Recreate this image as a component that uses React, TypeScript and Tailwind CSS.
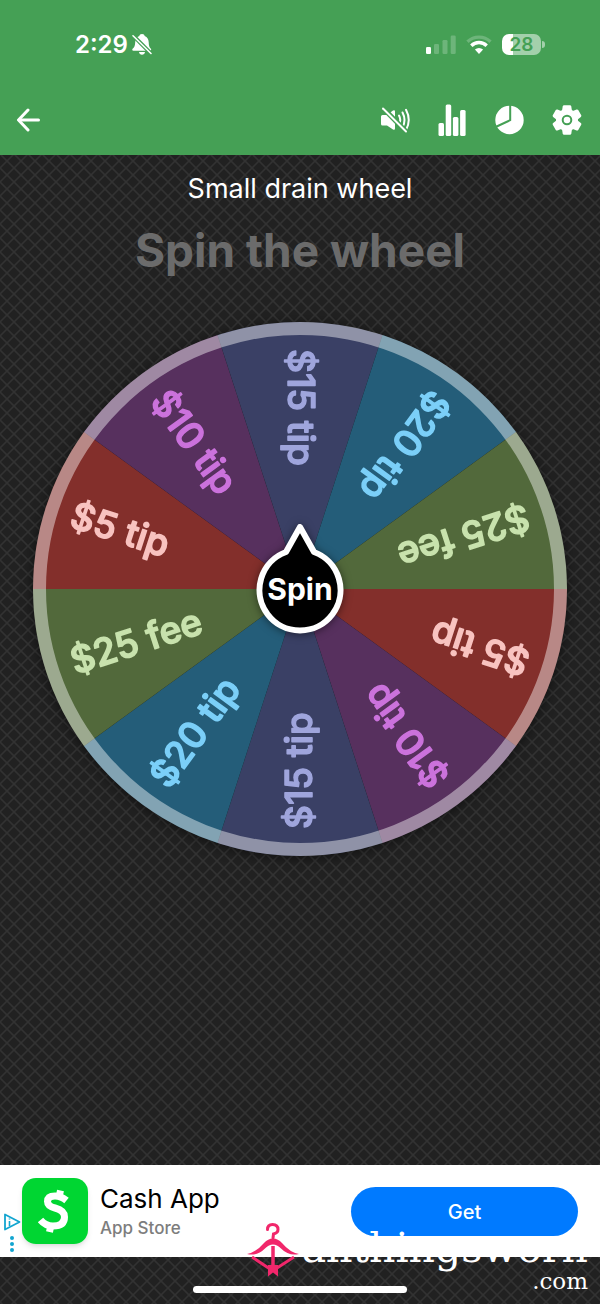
import React, { useState } from "react";

interface Slice {
  label: string;
  fill: string;
  text: string;
}

const options: Slice[] = [
  { label: "$5 tip", fill: "#832f2b", text: "#f8c3c0" },
  { label: "$10 tip", fill: "#57305e", text: "#cb72dc" },
  { label: "$15 tip", fill: "#3a4065", text: "#9fa5dc" },
  { label: "$20 tip", fill: "#245d79", text: "#7bcff8" },
  { label: "$25 fee", fill: "#52693b", text: "#c8e2ad" },
];

// every option appears twice round the wheel
const slices = [...options, ...options];
const STEP = 360 / slices.length;
const RADIUS = 267;

function slicePath() {
  const half = ((STEP / 2) * Math.PI) / 180;
  const x = -RADIUS * Math.cos(half);
  const y = RADIUS * Math.sin(half);
  return `M0 0 L${x} ${y} A${RADIUS} ${RADIUS} 0 0 1 ${x} ${-y} Z`;
}

function StatusBar() {
  return (
    <div className="flex items-center justify-between pl-[75px] pr-[55px] pt-7">
      <div className="flex items-center gap-1">
        <span className="pt-px text-2xl font-semibold">2:29</span>
        <svg viewBox="0 0 20 21" className="h-[21px] w-5" aria-hidden="true">
          <path
            fill="#fff"
            d="M10 0c1.600 0 2.500 1 2.700 1.900 2.700 1 3.900 3.300 4 6.300.1 3.900.8 5.100 2.200 6.600.5.600.3 1.900-.8 1.900H1.300C.2 16.700 0 15.400.6 14.800 2.200 13.200 3 12 3.200 8.200c.1-3 1.400-5.300 4.100-6.300C7.500 1 8.400 0 10 0z M7 18h6c-.3 1.700-1.400 2.700-3 2.700S7.300 19.700 7 18z"
          />
          <path d="M0.500 1 L20 20.500" stroke="#45a055" strokeWidth="4" />
          <path d="M1 1.800 L19 19.500" stroke="#fff" strokeWidth="1.600" strokeLinecap="round" />
        </svg>
      </div>
      <div className="flex items-center gap-[10px]">
        <svg viewBox="0 0 30 19" className="h-[19px] w-[30px]" fill="#fff" aria-hidden="true">
          <rect x="0" y="12" width="5" height="7" rx="1.300" />
          <rect x="8" y="9" width="5" height="10" rx="1.300" opacity="0.220" />
          <rect x="16.500" y="5" width="5" height="14" rx="1.300" opacity="0.220" />
          <rect x="24.700" y="0.500" width="5" height="18.500" rx="1.300" opacity="0.220" />
        </svg>
        <svg viewBox="0 0 26 19" className="h-[19px] w-[26px]" aria-hidden="true">
          <path d="M1.500 6.800 A16.500 16.500 0 0 1 24.500 6.800" fill="none" stroke="#fff" strokeWidth="3.400" opacity="0.220" />
          <path d="M5.300 10.700 A11 11 0 0 1 20.700 10.700" fill="none" stroke="#fff" strokeWidth="3.400" />
          <path d="M8.900 14.600 A6 6 0 0 1 17.100 14.600 L13 19 Z" fill="#fff" />
        </svg>
        <div className="flex items-center gap-px">
          <div className="flex h-[21px] w-[39px] items-center justify-center rounded-[7px] bg-[linear-gradient(90deg,#fff_28%,#a3d0ab_28%)] pt-px text-[19px] font-semibold leading-5 text-[#45a055]">
            28
          </div>
          <div className="h-[7px] w-[3px] rounded-r-full bg-[#a3d0ab]" />
        </div>
      </div>
    </div>
  );
}

function Toolbar() {
  const [muted, setMuted] = useState(true);

  return (
    <div className="flex items-center justify-between pl-4 pr-[18px]">
      <button type="button" aria-label="Back">
        <svg viewBox="0 0 24 24" className="size-6" fill="none" stroke="#fff" strokeWidth="3" strokeLinecap="round" strokeLinejoin="round">
          <path d="M12 2 L2.500 12 L12 22" />
          <path d="M3.500 12 H22.500" />
        </svg>
      </button>
      <div className="flex items-center gap-7">
        <button type="button" aria-label="Sound" aria-pressed={muted} onClick={() => setMuted(!muted)}>
          <svg viewBox="0 0 30 30" className="size-[30px]" fill="none">
            <path d="M2.500 10 H7 L13 5.500 Q15 4.500 15 6.500 V23.500 Q15 25.500 13 24.500 L7 20.500 H2.500 Q1 20.500 1 19 V11.500 Q1 10 2.500 10 Z" fill="#fff" />
            <path d="M19 10.500 Q21.500 15 19 19.500" stroke="#fff" strokeWidth="2" strokeLinecap="round" />
            <path d="M22.500 7.500 Q26.500 15 22.500 22.500" stroke="#fff" strokeWidth="2" strokeLinecap="round" />
            <path d="M26 4.800 Q31.500 15 26 25" stroke="#fff" strokeWidth="2" strokeLinecap="round" />
            {muted && (
              <>
                <path d="M3 3 L26.500 27" stroke="#45a055" strokeWidth="5" />
                <path d="M3 3.500 L26 26.500" stroke="#fff" strokeWidth="2" strokeLinecap="round" />
              </>
            )}
          </svg>
        </button>
        <button type="button" aria-label="Statistics">
          <svg viewBox="0 0 28 32" className="h-8 w-7" fill="#fff">
            <rect x="0.500" y="19" width="5.500" height="13" rx="1.500" />
            <rect x="7.700" y="0.500" width="5.500" height="31.500" rx="1.500" />
            <rect x="14.900" y="13" width="5.500" height="19" rx="1.500" />
            <rect x="22.100" y="6" width="5.500" height="26" rx="1.500" />
          </svg>
        </button>
        <button type="button" aria-label="Chances">
          <svg viewBox="0 0 30 30" className="size-[30px]">
            <circle cx="15.500" cy="15" r="14.200" fill="#fff" />
            <path d="M16.200 0 V15.200 L0.500 22.500" fill="none" stroke="#45a055" strokeWidth="2" />
          </svg>
        </button>
        <button type="button" aria-label="Settings">
          <svg viewBox="0 0 30 30" className="size-[30px]">
            <g fill="#fff">
              <circle cx="15" cy="15" r="11" />
              {[0, 60, 120].map((a) => (
                <path
                  key={a}
                  transform={`rotate(${a} 15 15)`}
                  d="M12 0.300 H18 Q19 0.300 19.300 1.500 L20 6 V24 L19.300 28.500 Q19 29.700 18 29.700 H12 Q11 29.700 10.700 28.500 L10 24 V6 L10.700 1.500 Q11 0.300 12 0.300 Z"
                />
              ))}
            </g>
            <circle cx="15" cy="15" r="4.300" fill="#fff" stroke="#45a055" strokeWidth="2" />
          </svg>
        </button>
      </div>
    </div>
  );
}

function Wheel() {
  const [turns, setTurns] = useState(0);

  return (
    <div className="grid w-full px-8">
      <svg
        viewBox="-268 -268 536 536"
        className="col-start-1 row-start-1 w-full overflow-visible drop-shadow-[0_2px_6px_rgba(0,0,0,0.5)] transition-transform duration-1000"
        style={{ transform: `rotate(${turns * STEP}deg)` }}
      >
        {slices.map((slice, i) => (
          <path key={i} d={slicePath()} fill={slice.fill} transform={`rotate(${STEP / 2 + i * STEP})`} />
        ))}
        <circle r={RADIUS - 6.500} fill="none" stroke="#fff" strokeOpacity="0.430" strokeWidth="13" />
        {slices.map((slice, i) => (
          <text
            key={i}
            x="-240"
            y="12"
            transform={`rotate(${STEP / 2 + i * STEP})`}
            fill={slice.text}
            stroke={slice.text}
            strokeWidth="1.500"
            strokeLinejoin="round"
            className="text-[37px] font-medium"
          >
            {slice.label}
          </text>
        ))}
      </svg>
      <button
        type="button"
        onClick={() => setTurns(turns + 23)}
        className="z-10 col-start-1 row-start-1 grid size-[88px] place-items-center place-self-center"
      >
        <svg viewBox="-44 -44 88 88" className="col-start-1 row-start-1 size-full overflow-visible drop-shadow-[0_1px_4px_rgba(0,0,0,0.5)]" aria-hidden="true">
          <path
            d="M-14 -38 L0 -63 L14 -38 A40.500 40.500 0 1 1 -14 -38 Z"
            transform="translate(0 1)"
            fill="#000"
            stroke="#fff"
            strokeWidth="6"
            strokeLinejoin="round"
          />
        </svg>
        <span className="z-10 col-start-1 row-start-1 text-3xl font-bold text-white">Spin</span>
      </button>
    </div>
  );
}

function AdBanner() {
  return (
    <aside className="flex items-center bg-white py-[13px] pl-px pr-[22px]">
      <div className="-mb-2 flex w-[21px] flex-col items-center gap-[5px] self-end">
        <svg viewBox="0 0 18 18" className="size-[18px]" fill="none" stroke="#12a5d0" strokeLinejoin="round" aria-hidden="true">
          <path d="M2 1.500 V16.500 L16.500 9 Z" strokeWidth="1.800" />
          <path d="M6.500 5.500 V6.500 M6.500 8 V13" strokeWidth="1.600" />
        </svg>
        <svg viewBox="0 0 4 16" className="h-4 w-1" fill="#12a5d0" aria-hidden="true">
          <circle cx="2" cy="2" r="2" />
          <circle cx="2" cy="8" r="2" />
          <circle cx="2" cy="14" r="2" />
        </svg>
      </div>
      <svg viewBox="0 0 66 66" className="size-[66px] rounded-[14px] shadow-md" aria-hidden="true">
        <rect width="66" height="66" fill="#00d632" />
        <path
          d="M44.500 22.500 Q39 18 33 18 Q25.500 18 25.500 23.500 Q25.500 28 33 30 Q42.500 32.500 42.500 39 Q42.500 48 31 48 Q23.500 48 18.500 42"
          fill="none"
          stroke="#fff"
          strokeWidth="7"
        />
        <path d="M37.500 17 L38.500 12.500 M28.500 49 L27.500 54" stroke="#fff" strokeWidth="7" />
      </svg>
      <div className="ml-3 flex flex-1 flex-col gap-px">
        <span className="text-[26px] leading-8 text-black">Cash App</span>
        <span className="text-[17px] font-medium leading-6 text-[#7d7d7d]">App Store</span>
      </div>
      <button type="button" className="h-[49px] w-[227px] rounded-full bg-[#007aff] pt-px text-xl font-medium text-white">
        Get
      </button>
    </aside>
  );
}

function Watermark() {
  return (
    <div className="pointer-events-none absolute bottom-[17px] right-3 flex items-start">
      <svg viewBox="0 0 54 54" className="mr-[2px] mt-[2px] h-[54px] w-[54px]" fill="none" stroke="#f1276b" aria-hidden="true">
        <path d="M21.500 6.500 Q21.500 1.500 26.500 1.500 Q32 1.500 32 6.500 Q32 10 27.500 11 L27 15" strokeWidth="3" strokeLinecap="round" />
        <path
          d="M1 31 Q10 29.500 18 20 Q22 15.500 27 15.500 Q32 15.500 36 20 Q44 29.500 53 31 Q43 33.500 35 25.500 Q31 21.500 27 21.500 Q23 21.500 19 25.500 Q11 33.500 1 31 Z"
          fill="#f1276b"
          stroke="none"
        />
        <path d="M27 23 V45" strokeWidth="3.500" />
        <path d="M6 34 L24 46 M48 34 L31 45" strokeWidth="3" />
        <path d="M22 42 H32 V53.500 L27 49.500 L22 53.500 Z" fill="#f1276b" stroke="none" />
      </svg>
      <div className="flex flex-col items-end font-['DejaVu_Serif',serif] text-white">
        <span className="text-[41px] leading-[54px]">allthingsworn</span>
        <span className="text-[23px] leading-3">.com</span>
      </div>
    </div>
  );
}

export default function App() {
  return (
    <div className="relative flex min-h-screen flex-col bg-[#212121] bg-[linear-gradient(45deg,transparent_44%,#323232_48%_52%,transparent_56%),linear-gradient(-45deg,transparent_44%,#323232_48%_52%,transparent_56%)] bg-size-[14px_14px] font-['Inter',sans-serif] text-white">
      <header className="flex flex-col gap-[43px] bg-[#45a055] pb-[19px]">
        <StatusBar />
        <Toolbar />
      </header>
      <main className="flex flex-1 flex-col items-center">
        <h2 className="mt-4 text-[27px] leading-9">Small drain wheel</h2>
        <h1 className="mb-[43px] mt-[15px] text-[46px] font-bold leading-[56px] text-[#6b6b6b]">Spin the wheel</h1>
        <Wheel />
      </main>
      <AdBanner />
      <footer className="flex h-[47px] items-end justify-center pb-[11px]">
        <div className="h-[7px] w-[214px] rounded-full bg-white" />
      </footer>
      <Watermark />
    </div>
  );
}
